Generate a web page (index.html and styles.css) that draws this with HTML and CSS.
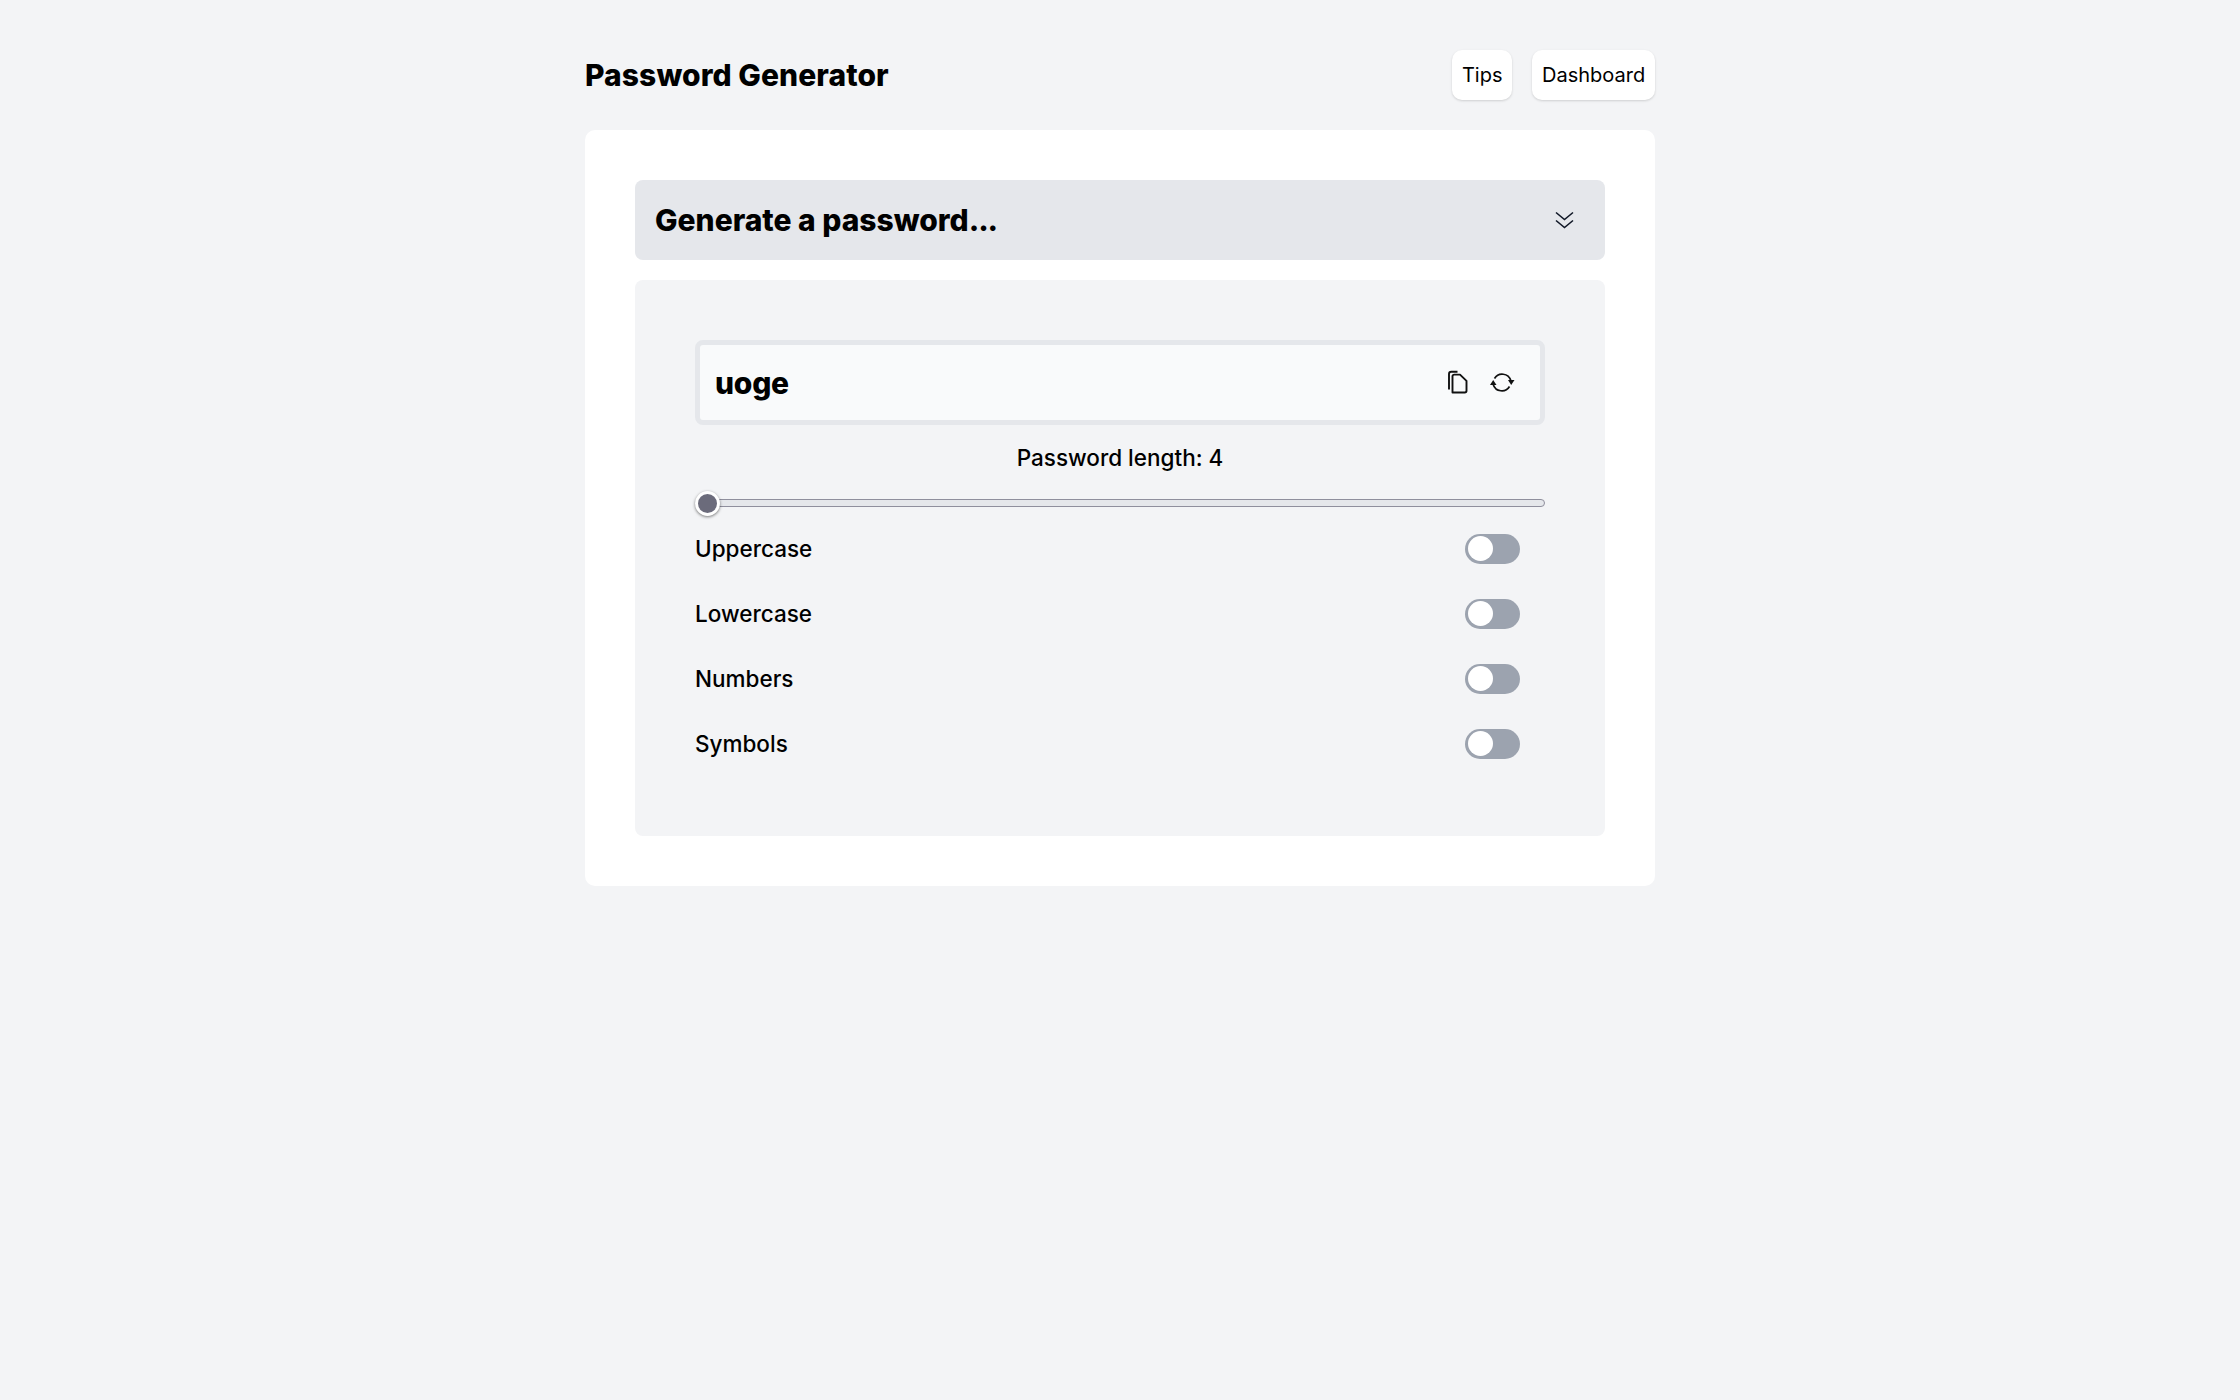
FILE: index.html
```html
<!DOCTYPE html>
<html lang="en">
<head>
  <meta charset="UTF-8">
  <title>Password Generator</title>
  <link rel="stylesheet" href="styles.css">
</head>
<body>
  <div class="page">
    <header class="top">
      <h1 class="title">Password Generator</h1>
      <nav class="nav">
        <a class="nav-btn">Tips</a>
        <a class="nav-btn">Dashboard</a>
      </nav>
    </header>
    <main class="card">
      <div class="accordion-head">
        <h2>Generate a password<span class="dots">...</span></h2>
        <svg class="chevrons" width="25" height="25" viewBox="0 0 25 25" fill="none" stroke="#111827" stroke-width="1.6">
          <path d="M4 4.500l8.500 7 8.500-7"/>
          <path d="M4 12.500l8.500 7 8.500-7"/>
        </svg>
      </div>
      <div class="accordion-body">
        <div class="output">
          <span class="output-text">uoge</span>
          <div class="output-icons">
            <svg width="25" height="25" viewBox="0 0 25 25" fill="none" stroke="#111" stroke-width="1.9" stroke-linejoin="round">
              <path d="M6.500 22.500V6.300c0-1 .7-1.700 1.700-1.700h5.800l6.500 6.300v9.900c0 1-.7 1.700-1.700 1.700H6.500z"/>
              <path d="M3 19.500V4c0-1.400 1-2.300 2.300-2.300H11.500"/>
            </svg>
            <svg width="27" height="25" viewBox="0 0 27 25" fill="none" stroke="#111" stroke-width="1.700">
              <path d="M5.500 8.500A9 9 0 0 1 21.800 10.500"/>
              <path d="M20.500 16.500A9 9 0 0 1 4.200 14.500"/>
              <path d="M19 10h6.500L22.200 15z" fill="#111" stroke="none"/>
              <path d="M1 15h6.500L4.200 10z" fill="#111" stroke="none"/>
            </svg>
          </div>
        </div>
        <p class="length-label">Password length: 4</p>
        <input class="slider" type="range" min="4" max="32" value="4">
        <ul class="options">
          <li class="option"><span>Uppercase</span><span class="toggle"></span></li>
          <li class="option"><span>Lowercase</span><span class="toggle"></span></li>
          <li class="option"><span>Numbers</span><span class="toggle"></span></li>
          <li class="option"><span>Symbols</span><span class="toggle"></span></li>
        </ul>
      </div>
    </main>
  </div>
</body>
</html>
```

FILE: styles.css
```css
* {
  margin: 0;
  padding: 0;
  box-sizing: border-box;
}

body {
  background-color: #f3f4f6;
  font-family: Inter, "Liberation Sans", sans-serif;
  color: black;
  min-height: 1400px;
}

.page {
  width: 1070px;
  margin: 0 auto;
  padding-top: 50px;
}

.top {
  display: flex;
  justify-content: space-between;
  align-items: center;
  height: 50px;
  margin-bottom: 30px;
}

.title {
  font-size: 30px;
  font-weight: 800;
  letter-spacing: 0.08px;
}

.nav {
  display: flex;
  gap: 20px;
}

.nav-btn {
  display: block;
  height: 50px;
  padding: 0 9.800px;
  line-height: 50px;
  font-size: 20px;
  background-color: white;
  border-radius: 10px;
  box-shadow: 0 1px 3px rgba(0, 0, 0, 0.1), 0 1px 2px rgba(0, 0, 0, 0.06);
}

.card {
  height: 756px;
  padding: 50px;
  background-color: white;
  border-radius: 10px;
}

.accordion-head {
  display: flex;
  justify-content: space-between;
  align-items: center;
  height: 80px;
  padding: 0 28px 0 20px;
  margin-bottom: 20px;
  background-color: #e5e7eb;
  border-radius: 8px;
}

.accordion-head h2 {
  font-size: 30px;
  font-weight: 800;
  font-feature-settings: "calt" 0;
}

.dots {
  letter-spacing: -1.200px;
}

.accordion-body {
  height: 556px;
  padding: 60px;
  background-color: #f3f4f6;
  border-radius: 8px;
}

.output {
  display: flex;
  justify-content: space-between;
  align-items: center;
  height: 85px;
  padding: 0 24px 0 15px;
  background-color: #f9fafb;
  border: 5px solid #e5e7eb;
  border-radius: 8px;
}

.output-text {
  font-size: 30px;
  font-weight: 800;
  letter-spacing: -0.25px;
}

.output-icons {
  display: flex;
  align-items: center;
  gap: 18px;
}

.output-icons svg {
  display: block;
}

.length-label {
  margin-top: 17px;
  font-size: 22.500px;
  font-weight: 500;
  line-height: 32px;
  text-align: center;
}

.slider {
  display: block;
  width: 100%;
  height: 8px;
  margin-top: 25px;
  appearance: none;
  background-color: #e5e7eb;
  border: 1.500px solid #8f8f9d;
  border-radius: 4px;
  overflow: visible;
}

.slider::-webkit-slider-thumb {
  appearance: none;
  width: 25px;
  height: 25px;
  margin-left: -1px;
  background-color: #6b6b7b;
  border: 3px solid white;
  border-radius: 50%;
  box-shadow: 0 1px 3px rgba(0, 0, 0, 0.5);
}

.options {
  list-style-type: none;
  margin-top: 9px;
}

.option {
  display: flex;
  justify-content: space-between;
  align-items: center;
  height: 65px;
  padding-right: 25px;
  font-size: 22.500px;
  font-weight: 500;
}

.toggle {
  display: block;
  position: relative;
  width: 55px;
  height: 30px;
  background-color: #9ca3af;
  border-radius: 15px;
}

.toggle::after {
  content: "";
  position: absolute;
  top: 2.500px;
  left: 2.500px;
  width: 25px;
  height: 25px;
  background-color: white;
  border-radius: 50%;
}
```
